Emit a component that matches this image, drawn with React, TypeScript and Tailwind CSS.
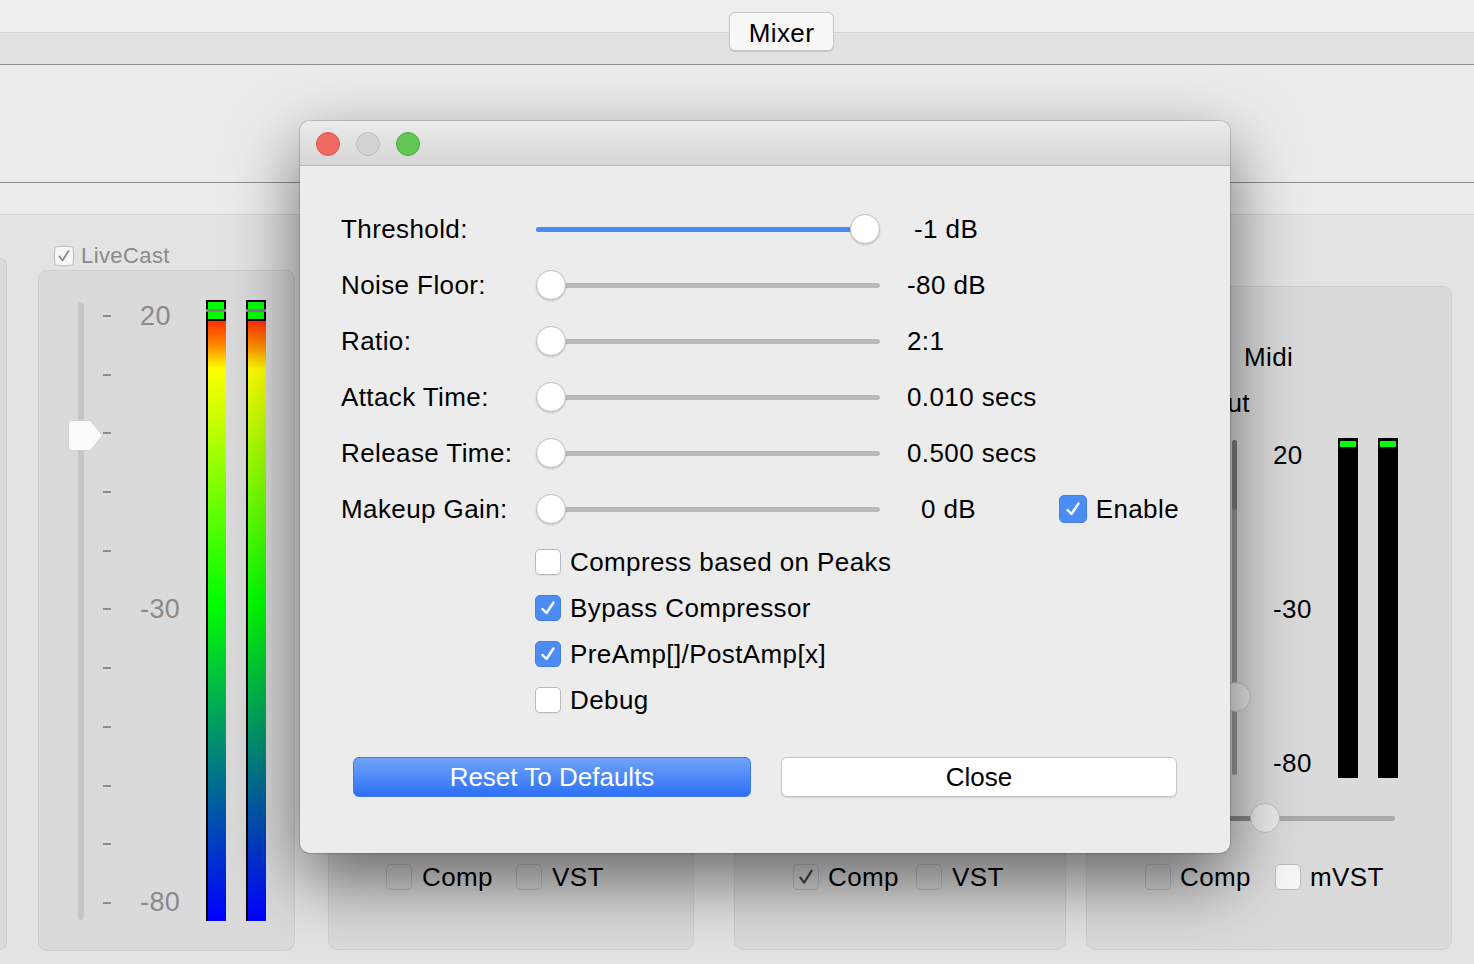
import React from "react";

const sliders = [
  { label: "Threshold:", value: "-1 dB", pos: 314, blue: true, gap: "ml-[34px]" },
  { label: "Noise Floor:", value: "-80 dB", pos: 0, blue: false, gap: "ml-[27px]" },
  { label: "Ratio:", value: "2:1", pos: 0, blue: false, gap: "ml-[27px]" },
  { label: "Attack Time:", value: "0.010 secs", pos: 0, blue: false, gap: "ml-[27px]" },
  { label: "Release Time:", value: "0.500 secs", pos: 0, blue: false, gap: "ml-[27px]" },
  { label: "Makeup Gain:", value: "0 dB", pos: 0, blue: false, gap: "ml-[41px]" },
];

const options = [
  { label: "Compress based on Peaks", checked: false },
  { label: "Bypass Compressor", checked: true },
  { label: "PreAmp[]/PostAmp[x]", checked: true },
  { label: "Debug", checked: false },
];

const ticks = [
  "20", "", "", "", "", "-30", "", "", "", "", "-80",
];

function BlueBox({ checked, big }: { checked?: boolean; big?: boolean }) {
  if (checked) {
    return (
      <div
        className={`${big ? "w-[28px] h-[28px]" : "w-[26px] h-[26px]"} shrink-0 rounded-[5px] bg-[#4b8cf5] border border-[#4382ec] flex items-center justify-center`}
      >
        <svg width="20" height="20" viewBox="0 0 20 20">
          <path
            d="M4.5 11 L8.5 15 L15.5 4.5"
            fill="none"
            stroke="white"
            strokeWidth="2.4"
            strokeLinecap="round"
            strokeLinejoin="round"
          />
        </svg>
      </div>
    );
  }
  return (
    <div className="w-[26px] h-[26px] shrink-0 rounded-[5px] bg-white border border-[#b9b9b9] shadow-[0_1px_1px_rgba(0,0,0,0.06)]" />
  );
}

function GrayBox({ checked, light, small }: { checked?: boolean; light?: boolean; small?: boolean }) {
  return (
    <div
      className={`${small ? "w-[20px] h-[20px] rounded-[4px]" : "w-[26px] h-[26px] rounded-[5px]"} shrink-0 border border-[#bdbdbd] flex items-center justify-center ${light ? "bg-[#f6f6f6]" : "bg-[#d8d8d8]"}`}
    >
      {checked && (
        <svg width={small ? 16 : 20} height={small ? 16 : 20} viewBox="0 0 16 16">
          <path
            d="M3.5 8.5 L6.5 12.5 L12.5 3"
            fill="none"
            stroke={small ? "#8a8a8a" : "#444"}
            strokeWidth="1.8"
            strokeLinecap="round"
            strokeLinejoin="round"
          />
        </svg>
      )}
    </div>
  );
}

function Slider({ pos, blue }: { pos: number; blue: boolean }) {
  return (
    <div className="relative w-[344px] h-[30px] flex items-center shrink-0">
      <div className="w-full h-[5px] rounded-full bg-[#b9b9b9]" />
      {blue && (
        <div
          className="absolute left-0 h-[5px] rounded-full bg-[#4c8bf5]"
          style={{ width: pos + 15 }}
        />
      )}
      <div
        className="absolute top-0 w-[30px] h-[30px] rounded-full bg-white border border-[#c4c4c4] shadow-[0_1px_2px_rgba(0,0,0,0.2)]"
        style={{ left: pos }}
      />
    </div>
  );
}

function ColorMeter() {
  return (
    <div className="w-[20px] h-[621px] bg-black pl-[2px] pt-[2px] flex flex-col">
      <div className="relative h-[17px] bg-[#00ff00] mr-[2px]">
        <div className="absolute left-[-2px] right-[-2px] top-[7px] h-[3px] bg-[#808080]" />
      </div>
      <div className="h-[2px]" />
      <div className="flex-1 bg-[linear-gradient(to_bottom,#ff3000_0%,#ff8a00_4%,#ffff00_8%,#00ff00_47%,#0000ff_100%)]" />
    </div>
  );
}

function BlackMeter() {
  return (
    <div className="w-[20px] h-[340px] bg-black pt-[3px] px-[2px]">
      <div className="h-[6px] bg-[#00ff00]" />
    </div>
  );
}

export default function App() {
  return (
    <div className="relative w-[1474px] h-[964px] overflow-hidden bg-[#e3e3e3] text-black font-['Liberation_Sans',Arial,sans-serif] tracking-[0.4px]">
      {/* tab strip */}
      <div className="h-[33px] bg-[#ededed] border-b border-[#d3d3d3]" />
      <div className="h-[32px] bg-[#e2e2e2] border-b border-[#8e8e8e]" />
      <div className="absolute left-[729px] top-[12px] w-[105px] h-[39px] rounded-[6px] bg-[#f7f7f7] border border-[#c6c6c6] shadow-[0_1px_1px_rgba(0,0,0,0.12)] flex items-center justify-center pt-[3px] text-[26px]">
        Mixer
      </div>
      <div className="h-[118px] bg-[#ececec] border-b border-[#8b8b8b]" />
      <div className="h-[32px] bg-[#ececec] border-b border-[#d6d6d6]" />

      {/* mixer strips */}
      <div className="flex items-start">
        <div className="w-[7px] h-[692px] mt-[43px] shrink-0 rounded-r-[8px] bg-[#dadada] border border-l-0 border-[#cfcfcf]" />

        <div className="ml-[31px] pt-[31px] flex flex-col shrink-0">
          <div className="h-[20px] flex items-center gap-[7px] pl-[16px]">
            <GrayBox checked small light />
            <span className="text-[22px] text-[#8a8a8a] leading-none">LiveCast</span>
          </div>
          <div className="mt-[4px] w-[257px] h-[681px] rounded-[9px] bg-[#dadada] border border-[#cfcfcf] flex items-start pt-[31px] pl-[29px]">
            <div className="relative w-[35px] h-[618px] shrink-0">
              <div className="absolute left-[10px] top-0 bottom-0 w-[6px] rounded-full bg-[#c6c6c6]" />
              <svg className="absolute left-0 top-[118px]" width="36" height="31" viewBox="0 0 36 31">
                <path
                  d="M4 0.5 H22.5 L34.5 15.5 L22.5 30.5 H4 Q0.5 30.5 0.5 27 V4 Q0.5 0.5 4 0.5 Z"
                  fill="#fbfbfb"
                  stroke="#d2d2d2"
                  strokeWidth="1"
                />
              </svg>
            </div>
            <div className="w-[103px] h-[613px] mt-[1px] flex flex-col justify-between shrink-0">
              {ticks.map((t, i) => (
                <div key={i} className="h-[26px] flex items-center">
                  <div className="w-[8px] h-[2px] bg-[#8c8c8c]" />
                  {t && <span className="ml-[29px] text-[27px] leading-none text-[#8a8a8a]">{t}</span>}
                </div>
              ))}
            </div>
            <div className="-mt-[2px] flex gap-[20px]">
              <ColorMeter />
              <ColorMeter />
            </div>
          </div>
        </div>

        <div className="ml-[33px] mt-[71px] w-[366px] h-[664px] shrink-0 rounded-[9px] bg-[#dadada] border border-[#cfcfcf] flex flex-col justify-end pb-[59px] pl-[57px]">
          <div className="h-[26px] flex items-center text-[26px]">
            <GrayBox />
            <span className="ml-[10px]">Comp</span>
            <div className="ml-[23px]"><GrayBox /></div>
            <span className="ml-[10px]">VST</span>
          </div>
        </div>

        <div className="ml-[40px] mt-[71px] w-[332px] h-[664px] shrink-0 rounded-[9px] bg-[#dadada] border border-[#cfcfcf] flex flex-col justify-end pb-[59px] pl-[58px]">
          <div className="h-[26px] flex items-center text-[26px]">
            <GrayBox checked />
            <span className="ml-[9px]">Comp</span>
            <div className="ml-[17px]"><GrayBox /></div>
            <span className="ml-[10px]">VST</span>
          </div>
        </div>

        <div className="ml-[20px] mt-[71px] w-[366px] h-[664px] shrink-0 rounded-[9px] bg-[#dadada] border border-[#cfcfcf] flex flex-col text-[26px]">
          <div className="mt-[55px] pl-[157px] h-[30px] leading-[30px]">Midi</div>
          <div className="mt-[16px] w-[163px] h-[30px] leading-[30px] text-right">Output</div>
          <div className="mt-[20px] h-[340px] flex">
            <div className="ml-[134px] w-[30px] h-full relative shrink-0">
              <div className="absolute left-[11px] top-[2px] h-[335px] w-[5px] rounded-full bg-[#999]" />
              <div className="absolute left-[11px] top-[2px] h-[70px] w-[5px] rounded-full bg-[#7e7e7e]" />
              <div className="absolute left-0 top-[244px] w-[30px] h-[30px] rounded-full bg-[#e8e8e8] border border-[#c2c2c2]" />
            </div>
            <div className="ml-[22px] w-[65px] h-full pt-[2px] flex flex-col justify-between shrink-0">
              <div className="h-[30px] leading-[30px]">20</div>
              <div className="h-[30px] leading-[30px]">-30</div>
              <div className="h-[30px] leading-[30px]">-80</div>
            </div>
            <div className="flex gap-[20px]">
              <BlackMeter />
              <BlackMeter />
            </div>
          </div>
          <div className="mt-[25px] ml-[83px] w-[225px] h-[30px] relative flex items-center">
            <div className="w-full h-[5px] rounded-full bg-[#a9a9a9]" />
            <div className="absolute left-0 w-[95px] h-[5px] rounded-full bg-[#868686]" />
            <div className="absolute left-[80px] top-0 w-[30px] h-[30px] rounded-full bg-[#ebebeb] border border-[#c2c2c2]" />
          </div>
          <div className="mt-[31px] h-[26px] pl-[58px] flex items-center">
            <GrayBox />
            <span className="ml-[9px]">Comp</span>
            <div className="ml-[24px]"><GrayBox light /></div>
            <span className="ml-[9px]">mVST</span>
          </div>
        </div>
      </div>

      {/* compressor dialog */}
      <div className="absolute z-10 left-[300px] top-[121px] w-[930px] h-[732px] rounded-[10px] overflow-hidden bg-[#ececec] flex flex-col shadow-[0_26px_70px_rgba(0,0,0,0.55),0_0_0_1px_rgba(0,0,0,0.14)]">
        <div className="h-[45px] shrink-0 border-b border-[#b8b8b8] bg-linear-to-b from-[#ececec] to-[#d5d5d5] flex items-center gap-[16px] pl-[16px] pt-[1px]">
          <div className="w-[24px] h-[24px] rounded-full bg-[#ef6b5f] border border-[#d8584c]" />
          <div className="w-[24px] h-[24px] rounded-full bg-[#d2d2d2] border border-[#bcbcbc]" />
          <div className="w-[24px] h-[24px] rounded-full bg-[#62c655] border border-[#50aa43]" />
        </div>

        <div className="flex flex-col pt-[35px] pl-[41px] pr-[51px] text-[26px]">
          {sliders.map((s, i) => (
            <div key={s.label} className="h-[56px] flex items-center">
              <div className="w-[195px] shrink-0">{s.label}</div>
              <Slider pos={s.pos} blue={s.blue} />
              <div className={s.gap}>{s.value}</div>
              {i === sliders.length - 1 && (
                <div className="ml-auto flex items-center gap-[9px]">
                  <BlueBox checked big />
                  <span>Enable</span>
                </div>
              )}
            </div>
          ))}

          <div className="mt-[2px] flex flex-col">
            {options.map((o) => (
              <div key={o.label} className="h-[46px] flex items-center pl-[194px] gap-[9px]">
                <BlueBox checked={o.checked} />
                <span>{o.label}</span>
              </div>
            ))}
          </div>

          <div className="mt-[34px] flex gap-[30px] pl-[12px] tracking-normal">
            <div className="w-[398px] h-[40px] rounded-[6px] bg-linear-to-b from-[#70a3f8] to-[#2c6ef6] border border-[#3d78e6] text-white flex items-center justify-center">
              Reset To Defaults
            </div>
            <div className="w-[396px] h-[40px] rounded-[6px] bg-white border border-[#c6c6c6] shadow-[0_1px_1px_rgba(0,0,0,0.1)] flex items-center justify-center">
              Close
            </div>
          </div>
        </div>
      </div>
    </div>
  );
}
